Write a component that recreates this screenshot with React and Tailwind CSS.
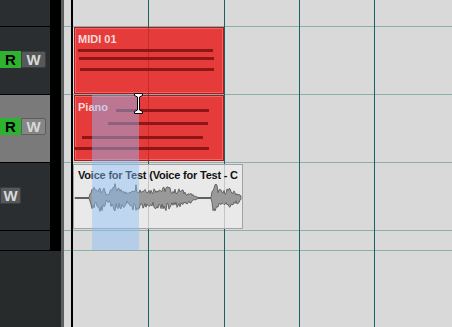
import React from 'react'

const rows = [
  { h: 'h-[27px]', tone: 'dark' },
  { h: 'h-[68px]', tone: 'dark', buttons: 'rw' },
  { h: 'h-[68px]', tone: 'sel', buttons: 'rw' },
  { h: 'h-[68px]', tone: 'dark', buttons: 'w' },
  { h: 'h-[20px]', tone: 'dark' },
]

// envelope of the audio clip, absolute x -> amplitude
const env = [
  [75, 0.5], [89, 0.5], [91, 8], [93, 14], [96, 10], [99, 15], [103, 12], [106, 6], [109, 5],
  [112, 11], [115, 15], [119, 11], [123, 13], [126, 7], [129, 6], [132, 12], [136, 15],
  [139, 11], [142, 10], [146, 13], [150, 9], [154, 11], [158, 13], [162, 10], [166, 14],
  [170, 11], [174, 9], [180, 10], [186, 7], [191, 5], [195, 2], [198, 0.5], [211, 0.5],
  [213, 14], [216, 16], [219, 10], [223, 7], [227, 11], [231, 9], [235, 7], [239, 5], [242, 1],
]

function envAt(x) {
  for (let i = 1; i < env.length; i++) {
    if (x <= env[i][0]) {
      const [x0, a0] = env[i - 1]
      const [x1, a1] = env[i]
      return a0 + ((x - x0) / (x1 - x0)) * (a1 - a0)
    }
  }
  return 0.5
}

function noise(n) {
  const s = Math.sin(n * 12.9898) * 43758.5453
  return s - Math.floor(s)
}

function wavePath() {
  const left = 74
  const mid = 33
  const top = []
  const bottom = []
  for (let x = 1; x <= 167; x += 1) {
    const a = envAt(left + x)
    const up = a > 2 ? a * (0.4 + 0.6 * noise(x)) : a
    const down = a > 2 ? a * (0.4 + 0.6 * noise(x + 91)) : a
    top.push(`${x},${(mid - up).toFixed(1)}`)
    bottom.unshift(`${x},${(mid + down).toFixed(1)}`)
  }
  return `M${top.join(' L')} L${bottom.join(' L')} Z`
}

function RWButtons({ kind, selected }) {
  const wBg = selected ? 'bg-[#868686] border-[#5d5d5d]' : 'bg-[#565859] border-[#3b3d3e]'
  return (
    <div className="flex h-[17px] font-['Liberation_Sans',Arial,sans-serif] text-[15px] font-bold leading-none">
      {kind === 'rw' && (
        <div className="flex w-[21px] items-center justify-center bg-[#2fb22f] text-black">R</div>
      )}
      <div
        className={`flex items-center justify-center rounded-r-[2px] border text-[#d8d8d8] ${wBg} ${
          kind === 'w' ? 'w-[21px]' : 'w-[25px]'
        }`}
      >
        W
      </div>
    </div>
  )
}

function TrackHeaders() {
  return (
    <div className="flex w-[61px] flex-col">
      {rows.map((r, i) => (
        <div key={i} className={`flex ${r.h}`}>
          <div
            className={`flex w-[50px] flex-col border-b border-black ${
              r.tone === 'sel' ? 'bg-[#7a7a7a]' : 'bg-[#2a2e30]'
            } ${r.buttons ? (r.tone === 'sel' ? 'pt-[23px]' : 'pt-[24px]') : ''}`}
          >
            {r.buttons && <RWButtons kind={r.buttons} selected={r.tone === 'sel'} />}
          </div>
          <div className="w-[11px] bg-black" />
        </div>
      ))}
      <div className="flex-1 bg-[#272b2c]" />
    </div>
  )
}

function RowLines() {
  return (
    <div className="flex h-full flex-col">
      {rows.map((r, i) => (
        <div key={i} className={`${r.h} border-b border-[#8cb0ae]`} />
      ))}
      <div className="flex-1" />
    </div>
  )
}

function MidiClip({ className, title, bars }) {
  return (
    <div className={`absolute border border-[#a41c1c] bg-[#e63b3b] shadow-[inset_0_0_0_1px_#f06464] ${className}`}>
      <div className="absolute top-0 bottom-0 left-[73px] w-px bg-[#c42e2e]" />
      {bars.map((b, i) => (
        <div key={i} className={`absolute h-[3px] bg-[#8e1616] ${b}`} />
      ))}
      <div className="relative pl-[3px] pt-[5px] font-['Liberation_Sans',Arial,sans-serif] text-[11px] font-bold leading-[13px] text-[#f8dada]">
        {title}
      </div>
    </div>
  )
}

export default function App() {
  const wave = wavePath()
  return (
    <div className="flex h-[327px] w-[452px] overflow-hidden bg-[#272b2c]">
      <TrackHeaders />
      <div className="w-[3px] bg-[#5e5f60]" />
      <div className="w-[7px] bg-[#d8d8d8]">
        <RowLines />
      </div>
      <div className="w-[2px] bg-black" />

      {/* arrange area */}
      <div className="relative flex-1 bg-[#d9d9d9]">
        <RowLines />
        <div className="absolute inset-0 flex">
          <div className="w-[76px] border-r border-[#176262]" />
          <div className="w-[76px] border-r border-[#176262]" />
          <div className="w-[75px] border-r border-[#176262]" />
          <div className="w-[75px] border-r border-[#176262]" />
        </div>

        <MidiClip
          className="left-[1px] top-[27px] h-[67px] w-[150px]"
          title="MIDI 01"
          bars={[
            'left-[3px] top-[21px] w-[135px]',
            'left-[4px] top-[29px] w-[135px]',
            'left-[5px] top-[40px] w-[134px]',
          ]}
        />
        <MidiClip
          className="left-[1px] top-[95px] h-[66px] w-[150px]"
          title="Piano"
          bars={[
            'left-[41px] top-[13px] w-[93px]',
            'left-[33px] top-[26px] w-[100px]',
            'left-[7px] top-[40px] w-[121px]',
            'left-[-1px] top-[51px] w-[135px]',
          ]}
        />

        {/* audio event */}
        <div className="absolute left-[0px] top-[164px] h-[65px] w-[170px] overflow-hidden border border-[#a3a3a3] bg-[#e9e9e9]">
          <div className="absolute top-0 bottom-0 left-[74px] w-px bg-[#c4c4c4]" />
          <div className="absolute top-0 bottom-0 left-[150px] w-px bg-[#c4c4c4]" />
          <svg className="absolute left-0 top-0" width="168" height="63" viewBox="0 0 168 63">
            <line x1="1" y1="33" x2="167" y2="33" stroke="#555" strokeWidth="1" />
            <path d={wave} fill="#999" stroke="#505050" strokeWidth="0.8" strokeLinejoin="round" />
          </svg>
          <div className="relative whitespace-nowrap pl-[4px] pt-[4px] font-['Liberation_Sans',Arial,sans-serif] text-[11px] font-bold leading-[13px] tracking-[-0.2px] text-[#111]">
            Voice for Test (Voice for Test - C
          </div>
        </div>

        {/* range selection */}
        <div className="absolute left-[19px] top-[95px] h-[155px] w-[47px] bg-[rgba(140,190,250,0.45)]" />

        {/* text cursor */}
        <svg className="absolute left-[61px] top-[93px]" width="10" height="21" viewBox="0 0 10 21">
          <path
            d="M0.5,0.5 H8.5 V2.5 L5.5,4 V17 L8.5,18.5 V20.5 H0.5 V18.5 L3.5,17 V4 L0.5,2.5 Z"
            fill="#fff"
            stroke="#000"
            strokeWidth="1"
          />
        </svg>
      </div>
    </div>
  )
}
